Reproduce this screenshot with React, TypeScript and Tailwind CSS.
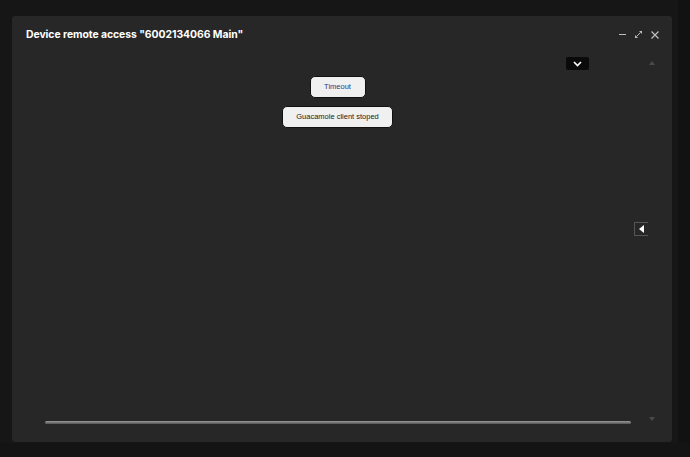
import React from "react";

export default function App() {
  return (
    <div className="w-[690px] h-[457px] bg-[#161616] relative overflow-hidden" style={{ fontFamily: "Inter, 'Liberation Sans', sans-serif" }}>
      <div className="absolute right-0 top-0 w-[12px] h-full bg-[#121212]" />
      <div className="absolute left-0 bottom-0 w-full h-[14px] bg-[#141414]" />
      <div className="absolute left-[12px] top-[16px] w-[660px] h-[426px] bg-[#272727] rounded-[3px] flex flex-col">
        <div className="flex items-center justify-between h-[36px] pl-[14px] pr-[13px] pt-[1px]">
          <div className="text-white font-bold text-[10.4px] tracking-[-0.05px]">Device remote access "6002134066 Main"</div>
          <div className="flex items-center gap-[9px] text-[#bdbdbd]">
            <svg width="7" height="7" viewBox="0 0 7 7"><path d="M0 3.5H7" stroke="currentColor" strokeWidth="1" /></svg>
            <svg width="7" height="7" viewBox="0 0 7 7" fill="currentColor"><path d="M4 0H7V3Z" /><path d="M0 7V4L3 7Z" /><path d="M5.5 1.5L1.5 5.5" stroke="currentColor" strokeWidth="1" /></svg>
            <svg width="8" height="8" viewBox="0 0 8 8"><path d="M0.5 0.5L7.5 7.5M7.5 0.5L0.5 7.5" stroke="currentColor" strokeWidth="1.2" /></svg>
          </div>
        </div>
        <div className="relative flex-1">
          <div className="absolute left-[554px] top-[5px] w-[23px] h-[13px] bg-[#0a0a0a] rounded-[2px] flex items-center justify-center">
            <svg width="9" height="6" viewBox="0 0 9 6"><path d="M1 1L4.5 4.5L8 1" stroke="white" strokeWidth="1.6" fill="none" /></svg>
          </div>
          <div className="absolute left-[637px] top-[9px] w-0 h-0 border-l-[3px] border-r-[3px] border-b-[4px] border-l-transparent border-r-transparent border-b-[#4a4a4a]" />
          <div className="absolute left-[637px] top-[365px] w-0 h-0 border-l-[3px] border-r-[3px] border-t-[4px] border-l-transparent border-r-transparent border-t-[#4a4a4a]" />
          <div className="flex flex-col items-center pt-[24px] gap-[8px] pr-[9px]" style={{ fontFamily: "'Liberation Sans', Arial, sans-serif" }}>
            <div className="h-[22px] w-[56px] flex items-center justify-center bg-[#f0f0f0] border border-[#111] rounded-[5px] text-[7.5px] text-[#1c3f86]">Timeout</div>
            <div className="h-[22px] w-[111px] flex items-center justify-center bg-[#f0f0f0] border border-[#111] rounded-[5px] text-[7.5px] text-[#222]">Guacamole client stoped</div>
          </div>
          <div className="absolute left-[622px] top-[170px] w-[14px] h-[14px] border border-[#555] border-r-0 rounded-l-[1px] flex items-center justify-center">
            <div className="w-0 h-0 border-t-[4px] border-b-[4px] border-r-[5px] border-t-transparent border-b-transparent border-r-white" />
          </div>
          <div className="absolute left-[33px] top-[369px] w-[586px] h-[3px] rounded-full bg-gradient-to-b from-[#9a9a9a] to-[#555]" />
        </div>
      </div>
    </div>
  );
}
